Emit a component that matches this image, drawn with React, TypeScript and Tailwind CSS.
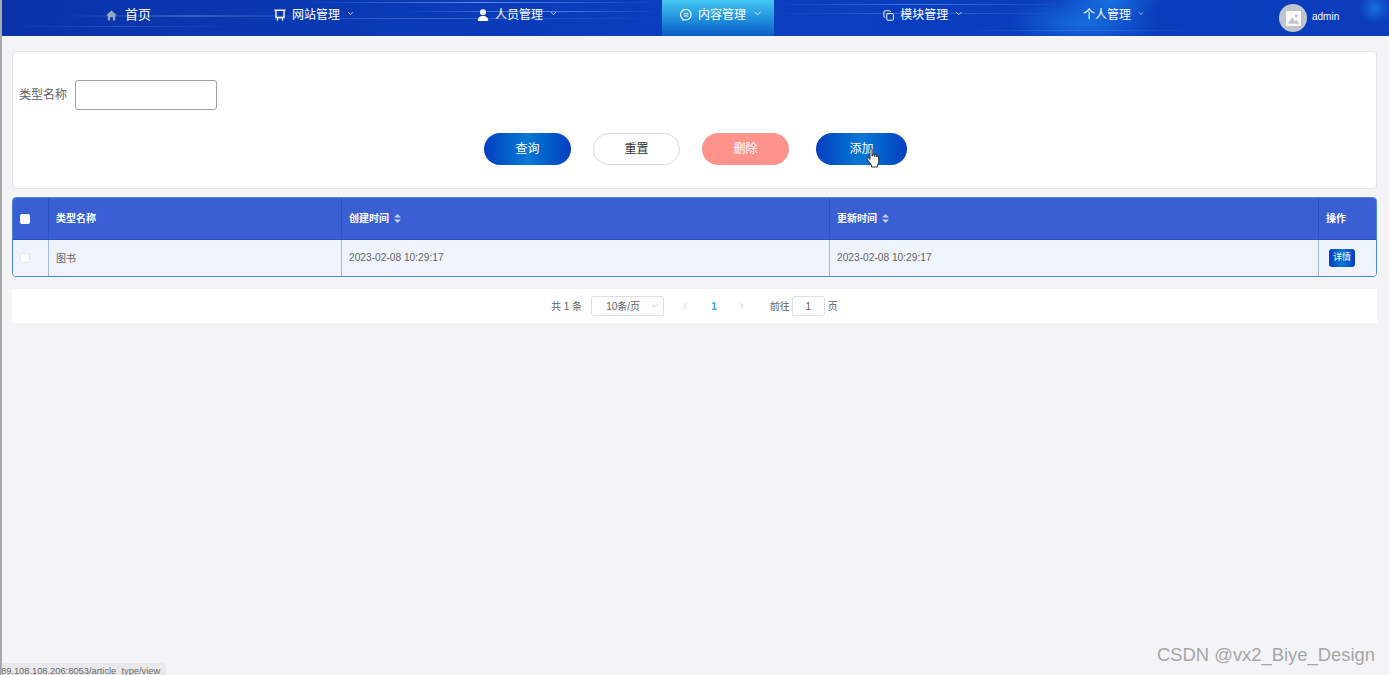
import { ChevronDown, ChevronLeft, ChevronRight, Copy } from 'lucide-react'
import type { ReactNode } from 'react'

const cjk = "font-['Liberation_Sans','Noto_Sans_CJK_SC',sans-serif]"

function NavItem({ icon, label, width, active }: { icon?: ReactNode; label: string; width: string; active?: boolean }) {
  return (
    <div className={`flex h-9 shrink-0 items-center gap-[6px] whitespace-nowrap pb-[6px] text-[12px] text-white ${width} ${active ? 'bg-gradient-to-b from-[#45c8f2] to-[#0d5cc8]' : ''}`}>
      {icon}
      <span>{label}</span>
      <ChevronDown className="mb-1 h-[11px] w-[11px]" strokeWidth={1.75} />
    </div>
  )
}

function HeaderStreaks() {
  return (
    <svg className="absolute inset-0 h-9 w-full" viewBox="0 0 1389 36" preserveAspectRatio="none">
      <defs>
        <linearGradient id="streak" x1="0" x2="1" y1="0" y2="0">
          <stop offset="0" stopColor="#7fb2ff" stopOpacity="0" />
          <stop offset="0.5" stopColor="#9cc6ff" stopOpacity="0.6" />
          <stop offset="1" stopColor="#7fb2ff" stopOpacity="0" />
        </linearGradient>
        <radialGradient id="glow">
          <stop offset="0" stopColor="#1b7de8" stopOpacity="0.75" />
          <stop offset="1" stopColor="#1b7de8" stopOpacity="0" />
        </radialGradient>
      </defs>
      <rect x="60" y="15.500" width="260" height="1" fill="url(#streak)" />
      <rect x="300" y="2" width="360" height="1" fill="url(#streak)" />
      <rect x="400" y="11" width="260" height="1" fill="url(#streak)" />
      <rect x="220" y="18" width="440" height="1" fill="url(#streak)" opacity="0.55" />
      <rect x="0" y="26" width="240" height="1" fill="url(#streak)" opacity="0.35" />
      <rect x="770" y="4" width="300" height="1" fill="url(#streak)" opacity="0.7" />
      <rect x="770" y="13" width="300" height="1" fill="url(#streak)" opacity="0.55" />
      <rect x="960" y="30" width="240" height="1" fill="url(#streak)" opacity="0.4" />
      <ellipse cx="1085" cy="22" rx="75" ry="28" fill="url(#glow)" />
      <ellipse cx="1110" cy="1" rx="50" ry="18" fill="url(#glow)" />
      <circle cx="1375" cy="8" r="16" fill="url(#glow)" />
    </svg>
  )
}

function SortCaret() {
  return (
    <svg className="ml-[5px] h-[9px] w-[7px]" viewBox="0 0 7 9" fill="#c3d0f3">
      <path d="M3.500 0 7 3.600H0z" />
      <path d="M3.500 9 0 5.400h7z" />
    </svg>
  )
}

function PillButton({ children, className }: { children: ReactNode; className: string }) {
  return <button className={`flex h-8 items-center justify-center rounded-full text-[12px] ${className}`}>{children}</button>
}

export default function App() {
  return (
    <div className={`relative h-screen overflow-hidden border-l-2 border-[#a9a9a9] bg-[#f4f4f6] ${cjk}`}>
      <header className="relative flex h-9 bg-gradient-to-r from-[#0a33a8] via-[#0a3fc0] to-[#0a3cbc]">
        <HeaderStreaks />
        <div className="relative flex w-full items-center">
          <div className="ml-[104px] flex h-9 w-[45px] shrink-0 items-center gap-[8px] whitespace-nowrap pb-[6px] text-[13px] text-white">
            <svg className="h-[11px] w-[11px] shrink-0" viewBox="0 0 12 12" fill="#9aa6c4">
              <path d="M6 .5 12 6h-2v5.500H7.500V8h-3v3.500H2V6H0z" />
            </svg>
            <span>首页</span>
          </div>
          <NavItem
            width="ml-[123px] w-[81px]"
            label="网站管理"
            icon={
              <svg className="h-3 w-3 shrink-0" viewBox="0 0 12 12" fill="none" stroke="#fff" strokeWidth="1.400">
                <path d="M.5 1.200h11M2 1.200v7.300h8V1.200M4 8.500 3.200 11.500M8 8.500l.8 3" />
              </svg>
            }
          />
          <NavItem
            width="ml-[122px] w-[81px]"
            label="人员管理"
            icon={
              <svg className="h-3 w-3 shrink-0" viewBox="0 0 12 12" fill="#fff">
                <circle cx="6" cy="3.200" r="3" />
                <path d="M.8 12c0-3.500 1.800-5 5.200-5s5.200 1.500 5.200 5z" />
              </svg>
            }
          />
          <NavItem
            width="ml-[104px] w-[112px] pl-[18px]"
            active
            label="内容管理"
            icon={
              <svg className="h-3 w-3 shrink-0" viewBox="0 0 12 12" fill="none" stroke="#fff" strokeWidth="1.100">
                <path d="M3.300 10.400A5.300 5.300 0 1 1 6 11H2.800z" strokeLinejoin="round" />
                <path d="M3.800 4.700h4.400M3.800 7h4.400" />
              </svg>
            }
          />
          <NavItem width="ml-[109px] w-[81px]" icon={<Copy className="h-[13px] w-[13px]" strokeWidth={2} />} label="模块管理" />
          <NavItem width="ml-[119px] w-[62px]" label="个人管理" />
          <div className="ml-[134px] flex h-7 w-7 shrink-0 items-center justify-center rounded-full bg-[#c0c4cc]">
            <svg className="h-[15px] w-[15px]" viewBox="0 0 16 16">
              <rect width="16" height="16" fill="#fff" opacity="0.9" />
              <circle cx="11" cy="5" r="1.600" fill="#c0c4cc" />
              <path d="M2 13.500 6.500 7l3 4 1.600-1.600 3 4.100z" fill="#c0c4cc" />
            </svg>
          </div>
          <span className="mb-1 ml-[5px] text-[10px] text-white">admin</span>
        </div>
      </header>

      <main className="pl-[10px] pr-[12px] pt-[15px]">
        <section className="h-[138px] rounded-[4px] border border-[#e4e4e6] bg-white pl-[6px] pt-[28px]">
          <div className="flex h-[30px] items-center text-[12px] text-[#606266]">
            <label className="w-[56px] whitespace-nowrap">类型名称</label>
            <input className="h-[30px] w-[142px] rounded-[3px] border border-[#a0a0a4] bg-white" />
          </div>
          <div className="mt-[23px] flex items-center pl-[465px]">
            <PillButton className="w-[87px] bg-gradient-to-r from-[#0a3cc0] via-[#0a78d4] to-[#0a3cc0] text-white">查询</PillButton>
            <PillButton className="ml-[22px] w-[87px] border border-[#d8d8dc] bg-white text-[#333]">重置</PillButton>
            <PillButton className="ml-[22px] w-[87px] bg-[#fe938c] text-white">删除</PillButton>
            <PillButton className="ml-[27px] w-[91px] bg-gradient-to-r from-[#0a3cc0] via-[#0a78d4] to-[#0a3cc0] text-white">添加</PillButton>
          </div>
        </section>

        <div className="mt-2 overflow-hidden rounded-[4px] border border-[#4d86d6]">
          <div className="grid h-[41px] grid-cols-[35px_293px_488px_489px_1fr] bg-[#3a5fd3] text-[10px] font-bold text-white">
            <div className="flex items-center pl-[7px]">
              <span className="h-[10px] w-[10px] rounded-[2px] bg-white" />
            </div>
            <div className="flex items-center border-l border-[#2c50c4] pl-[7px]">类型名称</div>
            <div className="flex items-center border-l border-[#2c50c4] pl-[7px]">创建时间<SortCaret /></div>
            <div className="flex items-center border-l border-[#2c50c4] pl-[7px]">更新时间<SortCaret /></div>
            <div className="flex items-center border-l border-[#2c50c4] pl-[7px]">操作</div>
          </div>
          <div className="grid h-[37px] grid-cols-[35px_293px_488px_489px_1fr] border-t border-[#2c50c4] bg-[#eff3fc] text-[10px] text-[#666]">
            <div className="flex items-center pl-[7px]">
              <span className="h-[10px] w-[10px] rounded-[2px] border border-[#e4e7ed] bg-white" />
            </div>
            <div className="flex items-center border-l border-[#a3b8e8] pl-[7px]">图书</div>
            <div className="flex items-center border-l border-[#a3b8e8] pl-[7px] text-[10.200px]">2023-02-08 10:29:17</div>
            <div className="flex items-center border-l border-[#a3b8e8] pl-[7px] text-[10.200px]">2023-02-08 10:29:17</div>
            <div className="flex items-center border-l border-[#a3b8e8] pl-[10px]">
              <button className="flex h-[18px] w-[26px] items-center justify-center rounded-[3px] bg-gradient-to-r from-[#0a3cc0] via-[#0a78d4] to-[#0a3cc0] text-[9px] text-white">详情</button>
            </div>
          </div>
        </div>

        <div className="mt-3 flex h-[34px] items-center bg-white pl-[539px] text-[10px] text-[#606266]">
          <span>共 1 条</span>
          <div className="ml-[9px] flex h-5 w-[73px] items-center rounded-[3px] border border-[#dcdfe6] pl-[14px]">
            <span>10条/页</span>
            <ChevronDown className="ml-[10px] h-[10px] w-[10px] text-[#c0c4cc]" />
          </div>
          <ChevronLeft className="ml-[16px] h-[10px] w-[10px] text-[#c0c4cc]" />
          <span className="ml-[21px] font-bold text-[#409eff]">1</span>
          <ChevronRight className="ml-[20px] h-[10px] w-[10px] text-[#c0c4cc]" />
          <span className="ml-[23px]">前往</span>
          <span className="ml-[2px] flex h-5 w-[33px] items-center justify-center rounded-[3px] border border-[#dcdfe6]">1</span>
          <span className="ml-[3px]">页</span>
        </div>
      </main>

      {/* mouse pointer over the add button */}
      <svg className="absolute left-[864px] top-[148px] h-[20px] w-[15px]" viewBox="0 0 15 20">
        <path d="M4 1.500c0-1.200 2-1.200 2 0V8h.600V6.800c0-1 1.800-1 1.800 0V8.500h.500V7.500c0-1 1.700-1 1.700 0v1.200h.500c0-1 1.500-1 1.500 0v4.800c0 1.500-.500 2.200-1 3.500v2H5.500v-1.800L1.300 11.500c-.800-1.200.800-2.300 1.700-1.200L4 11.500z" fill="#fff" stroke="#222" strokeWidth="0.900" strokeLinejoin="round" />
      </svg>

      <div className="absolute bottom-0 left-[-2px] h-[12px] w-[166px] overflow-hidden rounded-tr-[4px] bg-[#e9e9eb] pl-[1px] pt-[2px] text-[9.300px] leading-[12px] text-[#666]">
        <span className="whitespace-nowrap font-['Liberation_Sans',sans-serif]">89.108.108.206:8053/article_type/view</span>
      </div>
      <div className="absolute bottom-[6px] right-[14px] font-['Liberation_Sans',sans-serif] text-[18.400px] text-[#a6a6a8]">CSDN @vx2_Biye_Design</div>
    </div>
  )
}
